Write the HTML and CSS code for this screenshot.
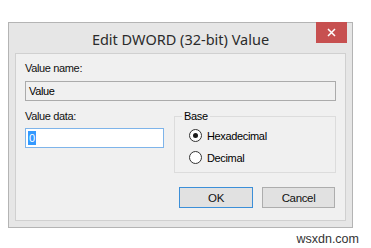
FILE: index.html
```html
<!DOCTYPE html>
<html lang="en">
<head>
    <meta charset="UTF-8">
    <meta name="viewport" content="width=device-width, initial-scale=1.0">
    <title>Edit DWORD (32-bit) Value</title>
    <link rel="stylesheet" href="styles.css">
</head>
<body>

    <!-- Dialog window -->
    <div class="window">
        <div class="titlebar">
            <span class="title">Edit DWORD (32-bit) Value</span>
        </div>
        <button class="close-btn" aria-label="Close">
            <svg width="9" height="9" viewBox="0 0 9 9">
                <path d="M1 1 L8 8 M8 1 L1 8" stroke="#fff" stroke-width="1.5" fill="none"/>
            </svg>
        </button>

        <div class="client">
            <div class="label">Value name:</div>
            <div class="textbox readonly">Value</div>

            <div class="row">
                <div class="data-col">
                    <div class="label data-label">Value data:</div>
                    <div class="textbox focused"><span class="selected">0</span></div>
                </div>

                <div class="group">
                    <span class="legend">Base</span>
                    <div class="radio">
                        <span class="circle checked"></span>
                        <span>Hexadecimal</span>
                    </div>
                    <div class="radio">
                        <span class="circle"></span>
                        <span>Decimal</span>
                    </div>
                </div>
            </div>

            <div class="buttons">
                <button class="btn default">OK</button>
                <button class="btn">Cancel</button>
            </div>
        </div>
    </div>

    <div class="watermark">wsxdn.com</div>

</body>
</html>
```

FILE: styles.css
```css
body {
    font-family: "Liberation Sans", Arial, sans-serif;
    background-color: white;
    margin: 0;
    padding: 0;
}
.window {
    position: relative;
    box-sizing: border-box;
    width: 345px;
    height: 206px;
    margin: 22px 0 0 8px;
    padding: 0 6px 6px 6px;
    background: #e6e6e6;
    border: 1px solid #b4b4b4;
}
.titlebar {
    height: 30px;
    display: flex;
    align-items: center;
    justify-content: center;
}
.title {
    font-family: "Noto Sans", sans-serif;
    font-size: 14.5px;
    color: #2b2b2b;
    padding-top: 1px;
}
.close-btn {
    position: absolute;
    top: -1px;
    right: 5px;
    width: 31px;
    height: 21px;
    padding: 0;
    border: none;
    background: #c75050;
    display: flex;
    align-items: center;
    justify-content: center;
}
.client {
    box-sizing: border-box;
    height: 168px;
    padding: 8px 9px 0 9px;
    background: #f0f0f0;
    border: 1px solid #d0d0d0;
    letter-spacing: -0.35px;
}
.label {
    font-size: 11px;
    line-height: 13px;
    color: #111;
}
.textbox {
    box-sizing: border-box;
    height: 20px;
    margin-top: 6px;
    padding: 0 3px;
    font-size: 11px;
    line-height: 18px;
    color: #000;
    border: 1px solid #ababab;
}
.textbox.readonly {
    background: #f0f0f0;
}
.textbox.focused {
    margin-top: 5px;
    padding: 2px 0 0 2px;
    background: white;
    border-color: #7eb4ea;
}
.selected {
    display: inline-block;
    height: 14px;
    line-height: 14px;
    vertical-align: top;
    background: #3399ff;
    color: white;
    padding: 0 1px;
}
.row {
    display: flex;
    gap: 10px;
}
.data-col {
    width: 139px;
}
.data-label {
    margin-top: 9px;
}
.group {
    position: relative;
    box-sizing: border-box;
    width: 162px;
    height: 57px;
    margin-top: 15px;
    padding: 12px 0 0 14px;
    border: 1px solid #dcdcdc;
}
.legend {
    position: absolute;
    top: -7px;
    left: 7px;
    padding: 0 2px;
    font-size: 11px;
    line-height: 13px;
    background: #f0f0f0;
}
.radio {
    display: flex;
    align-items: center;
    gap: 5px;
    height: 13px;
    margin-bottom: 9px;
    font-size: 11px;
}
.circle {
    box-sizing: border-box;
    width: 13px;
    height: 13px;
    border: 1px solid #333;
    border-radius: 50%;
    background: white;
    display: flex;
    align-items: center;
    justify-content: center;
}
.circle.checked::after {
    content: "";
    width: 5px;
    height: 5px;
    border-radius: 50%;
    background: #1a1a1a;
}
.buttons {
    display: flex;
    justify-content: flex-end;
    gap: 9px;
    margin-top: 14px;
    padding-right: 1px;
}
.btn {
    box-sizing: border-box;
    width: 73px;
    height: 21px;
    padding: 0;
    font-family: "Liberation Sans", Arial, sans-serif;
    font-size: 11.5px;
    letter-spacing: inherit;
    color: #111;
    background: #e1e1e1;
    border: 1px solid #adadad;
}
.btn.default {
    width: 74px;
    border-color: #3c8fd8;
}
.watermark {
    text-align: right;
    margin-top: 4px;
    padding-right: 12px;
    font-size: 12.5px;
    line-height: 14px;
    color: #333;
}
```
